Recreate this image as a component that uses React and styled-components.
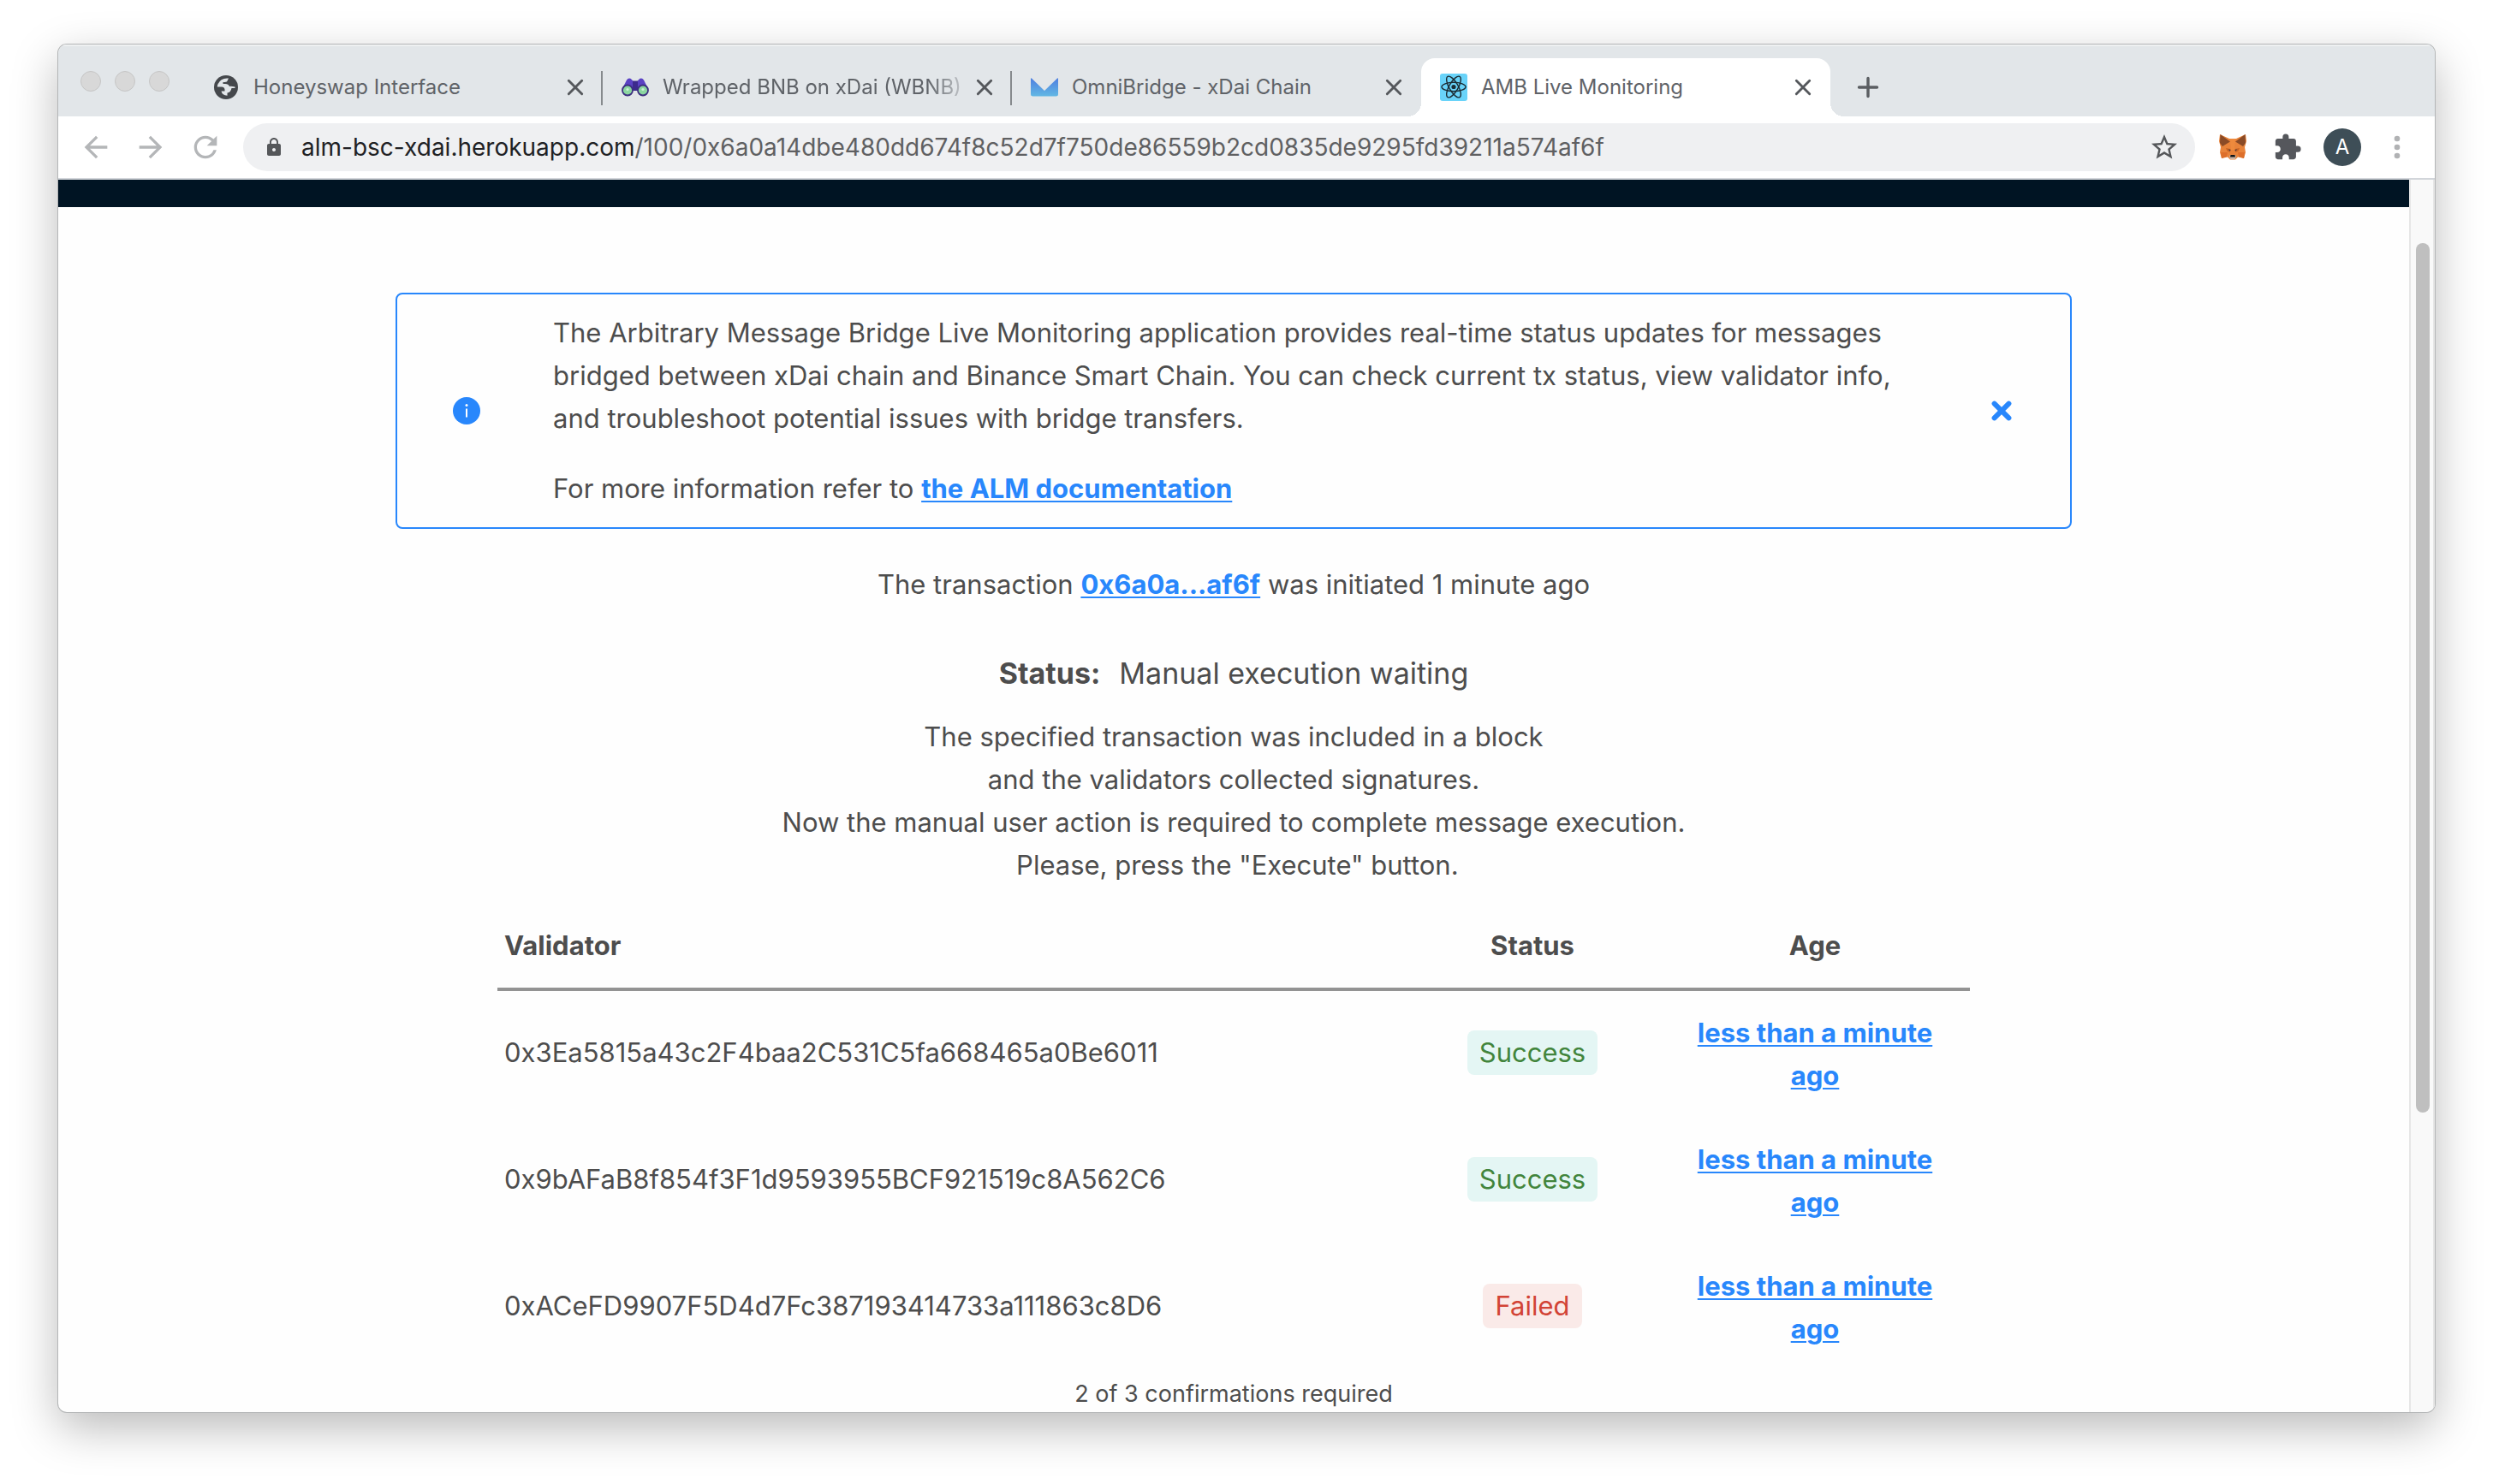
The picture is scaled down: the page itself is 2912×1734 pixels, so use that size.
import React from 'react';
import styled, { createGlobalStyle, css } from 'styled-components';
import { MdArrowBack, MdArrowForward, MdRefresh, MdLock, MdStarBorder, MdExtension } from 'react-icons/md';

const GlobalStyle = createGlobalStyle`
  * { box-sizing: border-box; }
  body {
    margin: 0;
    background: #fff;
    color: #4d4d4d;
    font-family: Inter, "Liberation Sans", sans-serif;
    font-size: 31px;
    line-height: 50px;
  }
  button, input { font: inherit; color: inherit; border: 0; padding: 0; background: none; }
`;

const Desktop = styled.div`
  display: flex;
  height: 100vh;
  padding: 52px 68px 84px;
`;

const BrowserWindow = styled.div`
  flex: 1;
  min-width: 0;
  display: flex;
  flex-direction: column;
  overflow: hidden;
  background: #fefefe;
  border-radius: 10px;
  box-shadow: 0 0 0 1px #b4b6b7, 0 18px 54px rgba(0, 0, 0, 0.28);
`;

const TabStrip = styled.div`
  display: flex;
  height: 84px;
  background: #e2e6e9;
  box-shadow: inset 0 2px 0 #eef0f1;
`;

const WindowLights = styled.div`
  display: flex;
  gap: 16px;
  padding: 31px 28px 0 26px;
`;

const Light = styled.span`
  width: 24px;
  height: 24px;
  border: 1px solid #c6c6c6;
  border-radius: 50%;
  background: #d8d8d8;
`;

const Tabs = styled.div`
  display: flex;
  margin-top: 16px;
`;

const flare = css`
  content: '';
  position: absolute;
  bottom: 0;
  width: 16px;
  height: 16px;
`;

const Tab = styled.div`
  position: relative;
  display: flex;
  align-items: center;
  width: 478px;
  padding: 0 20px 0 22px;
  font-size: 24px;
  color: #5f6368;
  ${(p) => p.$active && css`
    background: #fff;
    border-radius: 16px 16px 0 0;
    &::before { ${flare} left: -16px; background: radial-gradient(circle at 0 0, transparent 16px, #fff 16px); }
    &::after { ${flare} right: -16px; background: radial-gradient(circle at 100% 0, transparent 16px, #fff 16px); }
  `}
`;

const TabSeparator = styled.span`
  position: absolute;
  right: 0;
  top: 15px;
  width: 2px;
  height: 40px;
  background: #868a8d;
`;

const TabButton = styled.button`
  display: flex;
  align-items: center;
  gap: 16px;
  flex: 1;
  min-width: 0;
  svg { flex: none; }
`;

const TabTitle = styled.span`
  flex: 1;
  overflow: hidden;
  white-space: nowrap;
  text-align: left;
  line-height: 32px;
  ${(p) => p.$fade && css`mask-image: linear-gradient(to right, #000 85%, transparent);`}
`;

const IconButton = styled.button`
  display: flex;
  align-items: center;
  justify-content: center;
  flex: none;
  width: ${(p) => p.$width}px;
  height: 44px;
  color: ${(p) => p.$color};
  svg { flex: none; }
`;

const NewTab = styled(IconButton)`
  margin: 28px 0 0 12px;
`;

const Toolbar = styled.div`
  display: flex;
  align-items: center;
  height: 74px;
  padding: 0 12px;
  background: #fff;
  border-bottom: 2px solid #d2d5da;
`;

const Omnibox = styled.div`
  flex: 1;
  display: flex;
  align-items: center;
  height: 56px;
  margin: 0 12px;
  padding: 0 20px 0 24px;
  border-radius: 28px;
  background: #eff0f2;
  font-size: 28px;
  line-height: 36px;
`;

const Host = styled.label`
  margin-left: 20px;
  color: #202124;
`;

const PathInput = styled.input`
  flex: 1;
  min-width: 0;
  color: #5f6062;
  outline: none;
`;

const Avatar = styled.span`
  width: 44px;
  height: 44px;
  border-radius: 50%;
  background: #3e4e57;
  color: #fff;
  font-size: 24px;
  line-height: 44px;
  text-align: center;
`;

const Viewport = styled.div`
  flex: 1;
  min-height: 0;
  display: flex;
`;

const Page = styled.div`
  flex: 1;
  min-width: 0;
  overflow: hidden;
`;

const SiteHeader = styled.header`
  height: 32px;
  background: #001423;
`;

const ScrollTrack = styled.div`
  width: 30px;
  padding: 74px 4px 0 6px;
  background: #f9f9f9;
  border: solid #e6e6e6;
  border-width: 0 2px;
`;

const ScrollThumb = styled.div`
  width: 16px;
  height: 1016px;
  border-radius: 8px;
  background: #bfbfbf;
`;

const Content = styled.main`
  display: flex;
  flex-direction: column;
  align-items: center;
  padding: 100px 40px 0;
`;

const Alert = styled.section`
  display: flex;
  align-items: center;
  width: 100%;
  max-width: 1958px;
  padding: 20px 48px 20px 65px;
  border: 2px solid #2887fc;
  border-radius: 8px;
  svg { flex: none; }
`;

const AlertText = styled.div`
  flex: 1;
  padding: 0 85px;
  p { margin: 0; }
  p + p { margin-top: 32px; }
`;

const Link = styled.a`
  color: #2887fc;
  font-weight: 700;
  text-decoration: underline;
  text-decoration-thickness: 2px;
  text-underline-offset: 3px;
`;

const Line = styled.p`
  margin: 40px 0 0;
`;

const StatusLine = styled.p`
  display: flex;
  gap: 22px;
  margin: 54px 0 0;
  font-size: 34px;
  strong { font-weight: 700; }
`;

const Description = styled.p`
  margin: 24px 0 0;
  text-align: center;
  white-space: pre;
`;

const Table = styled.table`
  width: 100%;
  max-width: 1720px;
  margin-top: 20px;
  border-collapse: separate;
  border-spacing: 0;
  table-layout: fixed;
`;

const Col = styled.col`
  width: ${(p) => p.$width};
`;

const HeadCell = styled.th`
  padding: 24px 8px;
  border-bottom: 4px solid #939393;
  font-weight: 700;
  text-align: ${(p) => p.$align || 'center'};
`;

const Cell = styled.td`
  padding: ${(p) => (p.$narrow ? '24px 32px' : '22px 8px 26px')};
  text-align: ${(p) => p.$align || 'center'};
`;

const Badge = styled.span`
  display: inline-block;
  padding: 1px 14px;
  border-radius: 8px;
  vertical-align: top;
  color: ${(p) => (p.$failed ? '#d24335' : '#42853c')};
  background: ${(p) => (p.$failed ? '#faeae8' : '#e4f6f4')};
`;

const Confirmations = styled.p`
  margin: 2px 0 0;
  font-size: 27px;
`;

const CrossIcon = ({ size, weight }) => (
  <svg width={size} height={size} viewBox="0 0 20 20" fill="none" stroke="currentColor" strokeWidth={weight} strokeLinecap="round">
    <path d="M3 3l14 14M17 3L3 17" />
  </svg>
);

const PlusIcon = () => (
  <svg width="26" height="26" viewBox="0 0 26 26" fill="none" stroke="currentColor" strokeWidth="3.4" strokeLinecap="round">
    <path d="M13 2.5v21M2.5 13h21" />
  </svg>
);

const GlobeIcon = () => (
  <svg width="32" height="32" viewBox="-2 -2 32 32">
    <circle cx="14" cy="14" r="14" fill="#45484c" />
    <path
      d="M17 3.600Q8 2.600 4.400 10.500q-.6 1.500-.6 3H9q3 0 3.500 3v2H8.500q1 5 7 5.200v-3.200q4-.5 5-5.500h4v-1.500q-5-1-6.500-.5Q17 10 13 10h-2.500V8h2q3 0 3.500-2.500z"
      fill="#e2e6e9"
    />
  </svg>
);

const BinocularsIcon = () => (
  <svg width="32" height="32" viewBox="0 0 32 32">
    <path d="M6 7.500Q8.500 4 12 7l1.500 2h5L20 7q3.500-3 6 .5l4.500 9-8 8-4.500-6h-4l-4.500 6-8-8z" fill="#5b42c4" />
    <path d="M13 8.500h6V20h-6z" fill="#3d2a8c" />
    <circle cx="7" cy="19.500" r="6" fill="#8bd6a0" stroke="#3d2f80" strokeWidth="1.800" />
    <circle cx="25" cy="19.500" r="6" fill="#8bd6a0" stroke="#3d2f80" strokeWidth="1.800" />
    <circle cx="7" cy="18.500" r="1.600" fill="#c9f0d4" />
    <circle cx="25" cy="18.500" r="1.600" fill="#c9f0d4" />
  </svg>
);

const OmniBridgeIcon = () => (
  <svg width="32" height="32" viewBox="0 0 32 32">
    <defs>
      <linearGradient id="omni" x1="0" y1="0" x2="0" y2="1">
        <stop offset="0" stopColor="#4f7fe0" />
        <stop offset="1" stopColor="#62b8e4" />
      </linearGradient>
    </defs>
    <path d="M0 6q0-1 1-.5L16 20 31 5.500q1-.5 1 .5v18q0 2.500-2.500 2.500h-27Q0 26.500 0 24z" fill="url(#omni)" />
  </svg>
);

const ReactIcon = () => (
  <svg width="32" height="32" viewBox="0 0 32 32">
    <rect width="32" height="32" rx="3" fill="#69d3f9" />
    <circle cx="16" cy="15.500" r="2.600" fill="#1b2b33" />
    <g fill="none" stroke="#1b2b33" strokeWidth="1.400">
      <ellipse cx="16" cy="15.500" rx="14" ry="5.200" />
      <ellipse cx="16" cy="15.500" rx="14" ry="5.200" transform="rotate(60 16 15.500)" />
      <ellipse cx="16" cy="15.500" rx="14" ry="5.200" transform="rotate(120 16 15.500)" />
    </g>
  </svg>
);

const FoxIcon = () => (
  <svg width="32" height="32" viewBox="0 0 32 32">
    <path d="M1 1l11 5h8l11-5 1 8-2 7 1 6-2 7-7-1.500-3 3h-6l-3-3L3 29l-2-7 1-6L0 9z" fill="#e8833a" />
    <path d="M1.500 1L13 9.500 4 15 1 11zM30.500 1L19 9.500 28 15l3-4z" fill="#8a4b27" />
    <path d="M13 6h6l-1 13h-4z" fill="#ee8a3d" />
    <path d="M8 17l5.500 1-.5 4-3.500-1.500zM24 17l-5.500 1 .5 4 3.500-1.500z" fill="#c96424" />
    <path d="M2 22l8 0-1 5-6 2zM30 22l-8 0 1 5 6 2z" fill="#dd6f2b" />
    <path d="M10.500 18.500l3 .5-.5 1.500zM21.500 18.500l-3 .5.5 1.500z" fill="#2d3444" />
    <path d="M12 26l1.500-1h5l1.500 1-1 4h-6z" fill="#c8b3a4" />
    <path d="M13.500 25h5l.5 2.500h-6z" fill="#141414" />
  </svg>
);

const DotsIcon = () => (
  <svg width="8" height="28" viewBox="0 0 8 28" fill="currentColor">
    <circle cx="4" cy="4" r="3.300" />
    <circle cx="4" cy="14" r="3.300" />
    <circle cx="4" cy="24" r="3.300" />
  </svg>
);

const InfoIcon = () => (
  <svg width="32" height="32" viewBox="0 0 32 32">
    <circle cx="16" cy="16" r="16" fill="#2887fc" />
    <circle cx="16" cy="9.500" r="1.500" fill="#fff" />
    <path d="M16 13.500V23.500" stroke="#fff" strokeWidth="2" />
  </svg>
);

const tabs = [
  { title: 'Honeyswap Interface', icon: <GlobeIcon /> },
  { title: 'Wrapped BNB on xDai (WBNB)', icon: <BinocularsIcon />, fade: true },
  { title: 'OmniBridge - xDai Chain', icon: <OmniBridgeIcon />, last: true },
  { title: 'AMB Live Monitoring', icon: <ReactIcon />, active: true },
];

const validators = [
  { address: '0x3Ea5815a43c2F4baa2C531C5fa668465a0Be6011', status: 'Success' },
  { address: '0x9bAFaB8f854f3F1d9593955BCF921519c8A562C6', status: 'Success' },
  { address: '0xACeFD9907F5D4d7Fc387193414733a111863c8D6', status: 'Failed' },
];

export default function App() {
  return (
    <Desktop>
      <GlobalStyle />
      <BrowserWindow>
        <TabStrip>
          <WindowLights>
            <Light />
            <Light />
            <Light />
          </WindowLights>
          <Tabs>
            {tabs.map((tab) => (
              <Tab key={tab.title} $active={tab.active}>
                <TabButton type="button">
                  {tab.icon}
                  <TabTitle $fade={tab.fade}>{tab.title}</TabTitle>
                </TabButton>
                <IconButton type="button" aria-label="Close tab" $width={24} $color="#55585c">
                  <CrossIcon size={22} weight={2.6} />
                </IconButton>
                {!tab.active && !tab.last && <TabSeparator />}
              </Tab>
            ))}
          </Tabs>
          <NewTab type="button" aria-label="New tab" $width={64} $color="#5b5e62">
            <PlusIcon />
          </NewTab>
        </TabStrip>
        <Toolbar>
          <IconButton type="button" aria-label="Back" $width={64} $color="#b4b6b8"><MdArrowBack size={40} /></IconButton>
          <IconButton type="button" aria-label="Forward" $width={64} $color="#b4b6b8"><MdArrowForward size={40} /></IconButton>
          <IconButton type="button" aria-label="Reload" $width={64} $color="#b4b6b8"><MdRefresh size={40} /></IconButton>
          <Omnibox>
            <MdLock size={24} color="#55575a" />
            <Host htmlFor="address">alm-bsc-xdai.herokuapp.com</Host>
            <PathInput id="address" defaultValue="/100/0x6a0a14dbe480dd674f8c52d7f750de86559b2cd0835de9295fd39211a574af6f" />
            <IconButton type="button" aria-label="Bookmark" $width={32} $color="#55575a"><MdStarBorder size={36} /></IconButton>
          </Omnibox>
          <IconButton type="button" aria-label="Wallet" $width={64}><FoxIcon /></IconButton>
          <IconButton type="button" aria-label="Extensions" $width={64} $color="#55575c"><MdExtension size={34} /></IconButton>
          <IconButton type="button" aria-label="Profile" $width={64}><Avatar>A</Avatar></IconButton>
          <IconButton type="button" aria-label="Menu" $width={64} $color="#b1b2b4"><DotsIcon /></IconButton>
        </Toolbar>
        <Viewport>
          <Page>
            <SiteHeader />
            <Content>
              <Alert>
                <InfoIcon />
                <AlertText>
                  <p>
                    The Arbitrary Message Bridge Live Monitoring application provides real-time status updates for messages
                    bridged between xDai chain and Binance Smart Chain. You can check current tx status, view validator info,
                    and troubleshoot potential issues with bridge transfers.
                  </p>
                  <p>
                    For more information refer to <Link href="#docs">the ALM documentation</Link>
                  </p>
                </AlertText>
                <IconButton type="button" aria-label="Dismiss" $width={64} $color="#2887fc">
                  <CrossIcon size={24} weight={5} />
                </IconButton>
              </Alert>
              <Line>
                The transaction <Link href="#tx">0x6a0a...af6f</Link> was initiated 1 minute ago
              </Line>
              <StatusLine>
                <strong>Status:</strong>
                <span>Manual execution waiting</span>
              </StatusLine>
              <Description>
                {'The specified transaction was included in a block\nand the validators collected signatures.\nNow the manual user action is required to complete message execution.\n Please, press the "Execute" button.'}
              </Description>
              <Table>
                <colgroup>
                  <Col />
                  <Col $width="298px" />
                  <Col $width="362px" />
                </colgroup>
                <thead>
                  <tr>
                    <HeadCell $align="left">Validator</HeadCell>
                    <HeadCell>Status</HeadCell>
                    <HeadCell>Age</HeadCell>
                  </tr>
                </thead>
                <tbody>
                  {validators.map((v) => (
                    <tr key={v.address}>
                      <Cell $align="left">{v.address}</Cell>
                      <Cell><Badge $failed={v.status === 'Failed'}>{v.status}</Badge></Cell>
                      <Cell $narrow><Link href="#age">less than a minute ago</Link></Cell>
                    </tr>
                  ))}
                </tbody>
              </Table>
              <Confirmations>2 of 3 confirmations required</Confirmations>
            </Content>
          </Page>
          <ScrollTrack>
            <ScrollThumb />
          </ScrollTrack>
        </Viewport>
      </BrowserWindow>
    </Desktop>
  );
}
